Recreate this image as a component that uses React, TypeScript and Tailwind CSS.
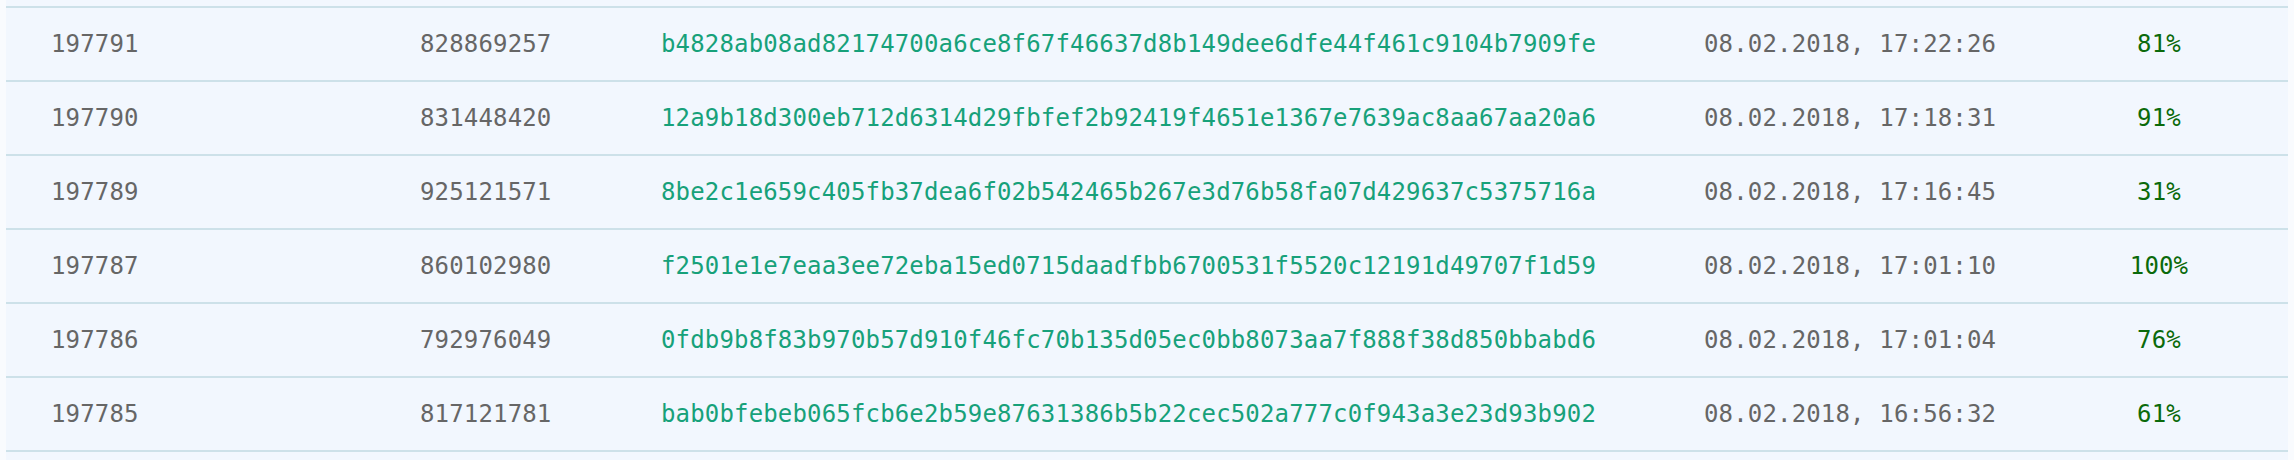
const rows = [
  { id: "197791", num: "828869257", hash: "b4828ab08ad82174700a6ce8f67f46637d8b149dee6dfe44f461c9104b7909fe", date: "08.02.2018, 17:22:26", pct: "81%" },
  { id: "197790", num: "831448420", hash: "12a9b18d300eb712d6314d29fbfef2b92419f4651e1367e7639ac8aa67aa20a6", date: "08.02.2018, 17:18:31", pct: "91%" },
  { id: "197789", num: "925121571", hash: "8be2c1e659c405fb37dea6f02b542465b267e3d76b58fa07d429637c5375716a", date: "08.02.2018, 17:16:45", pct: "31%" },
  { id: "197787", num: "860102980", hash: "f2501e1e7eaa3ee72eba15ed0715daadfbb6700531f5520c12191d49707f1d59", date: "08.02.2018, 17:01:10", pct: "100%" },
  { id: "197786", num: "792976049", hash: "0fdb9b8f83b970b57d910f46fc70b135d05ec0bb8073aa7f888f38d850bbabd6", date: "08.02.2018, 17:01:04", pct: "76%" },
  { id: "197785", num: "817121781", hash: "bab0bfebeb065fcb6e2b59e87631386b5b22cec502a777c0f943a3e23d93b902", date: "08.02.2018, 16:56:32", pct: "61%" },
];

export default function App() {
  return (
    <div className="w-full h-[460px] bg-[#f9fbfe] px-[6px] overflow-hidden">
      <div
        className="bg-[#f2f7fe] text-[24px] tracking-[0.16px] text-[#666666]"
        style={{ fontFamily: '"DejaVu Sans Mono", "Liberation Mono", monospace' }}
      >
        <div className="h-[6px]" />
        {rows.map((r) => (
          <div key={r.id} className="flex items-center h-[74px] border-t-2 border-[#cde1e9] leading-none">
            <div className="w-[414px] pl-[45px]">{r.id}</div>
            <div className="w-[241px]">{r.num}</div>
            <div className="w-[1043px] text-[#17a17a]">{r.hash}</div>
            <div className="w-[400px]">{r.date}</div>
            <div className="w-[110px] text-center text-[#0b6a0b]">{r.pct}</div>
          </div>
        ))}
        <div className="h-[10px] border-t-2 border-[#cde1e9]" />
      </div>
    </div>
  );
}
